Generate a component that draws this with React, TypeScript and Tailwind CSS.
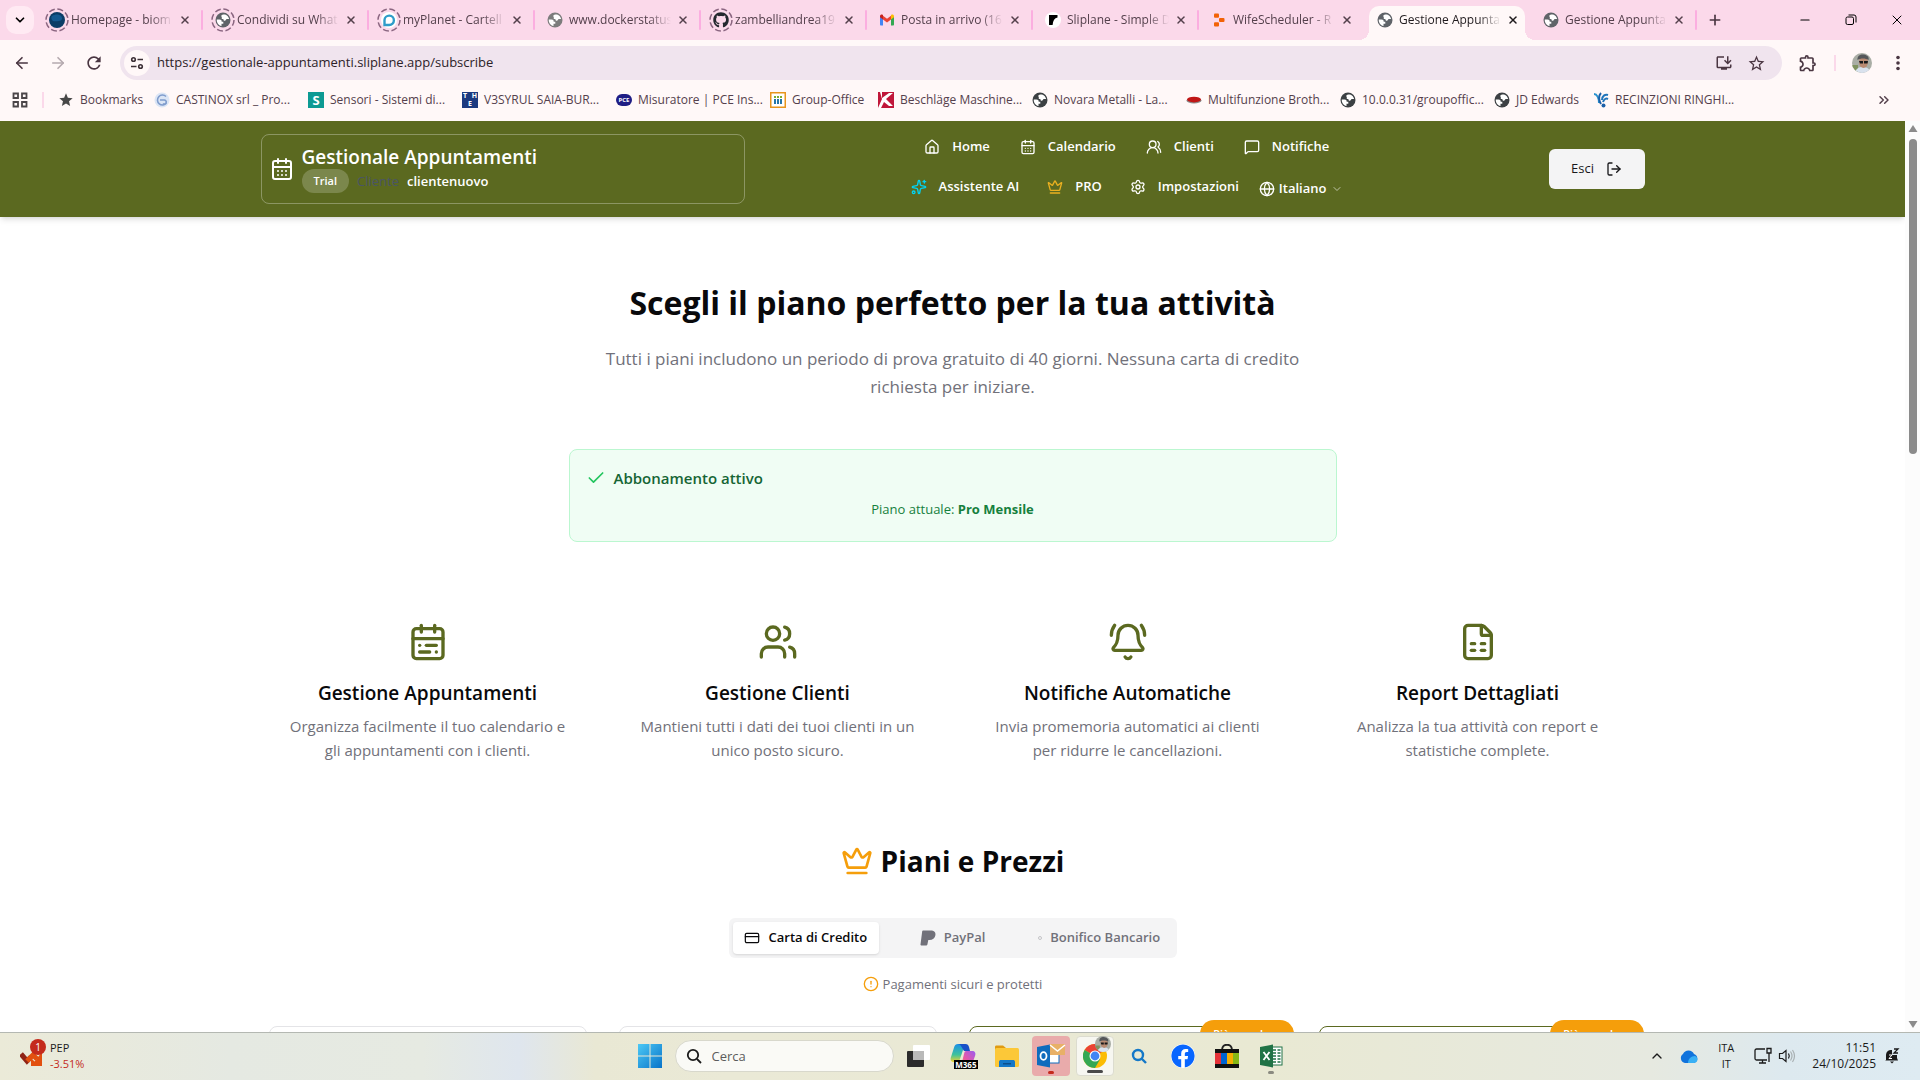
import React from "react";
import {
  ArrowLeft,
  ArrowRight,
  BellRing,
  CalendarDays,
  CalendarRange,
  Check,
  ChevronDown,
  ChevronUp,
  ChevronsRight,
  CircleAlert,
  CreditCard,
  Crown,
  FileSpreadsheet,
  Globe,
  House,
  LogOut,
  MessageSquare,
  Minus,
  Plus,
  Settings,
  Sparkles,
  Users,
  UsersRound,
  X,
} from "lucide-react";
import { FaFacebook, FaGithub } from "react-icons/fa";
import { MdOutlineExtension, MdOutlineInstallDesktop, MdRefresh, MdStar, MdStarBorder } from "react-icons/md";

/* ---------- small drawings ---------- */

function GlobeIcon({ className = "size-4 text-[#5f6368]" }: { className?: string }) {
  return (
    <svg viewBox="0 0 16 16" className={className} aria-hidden="true">
      <circle cx="8" cy="8" r="7.5" fill="currentColor" />
      <path d="M1.800 7.500h2.700c1.700 0 2.200.8 2.200 2.200h1.600v2H6.500v2.300C3.500 13.500 1.500 10.800 1.800 7.500zM6.300 4.200c0-1.200.8-1.700 2-1.800h1.800c2.200.8 3.700 2.600 4 4.600h-2.300c-.8 0-1 1.800-2 1.800-1.200 0-1.400-.9-1.400-1.800H6.800V5.200z" fill="#fff" />
    </svg>
  );
}

function Ringed({ children }: { children: React.ReactNode }) {
  return (
    <span className="relative grid size-6 place-items-center">
      <svg viewBox="0 0 24 24" className="absolute inset-0 size-6" fill="none" stroke="#8a6580" strokeWidth="1.5" aria-hidden="true">
        <circle cx="12" cy="12" r="11" strokeDasharray="6 2.640" />
      </svg>
      {children}
    </span>
  );
}

function EarthIcon() {
  return (
    <svg viewBox="0 0 16 16" className="size-4" aria-hidden="true">
      <circle cx="8" cy="8" r="8" fill="#0b3d66" />
      <path d="M3 4c3-2 7-2 9 0s1 5-2 5-6 1-7-1-1-3 0-4z" fill="#14598f" />
    </svg>
  );
}

function PlanetIcon() {
  return (
    <svg viewBox="0 0 16 16" className="size-4" aria-hidden="true">
      <circle cx="8" cy="8" r="8" fill="#fff" />
      <path d="M3.500 13V8a4.700 4.700 0 1 1 4.700 5z" fill="none" stroke="#2f9cc9" strokeWidth="2.400" />
    </svg>
  );
}

function GmailIcon() {
  return (
    <svg viewBox="0 0 16 16" className="size-4" aria-hidden="true">
      <path d="M1 4v8.500c0 .5.4 1 1 1h2V7z" fill="#4285f4" />
      <path d="M15 4v8.500c0 .5-.4 1-1 1h-2V7z" fill="#34a853" />
      <path d="M4 3.800v3.600l4 3 4-3V3.800l-4 3z" fill="#ea4335" />
      <path d="M1 4c0-1.500 1.700-2 2.600-1.300L4 3v4.400L1 5.200z" fill="#c5221f" />
      <path d="M15 4c0-1.500-1.700-2-2.600-1.300L12 3v4.400l3-2.200z" fill="#fbbc04" />
    </svg>
  );
}

function SliplaneIcon() {
  return (
    <svg viewBox="0 0 16 16" className="size-4" aria-hidden="true">
      <circle cx="8" cy="8" r="8" fill="#fff" />
      <path d="M4 3h8.500v2.500C9.500 6 8 8.500 7.600 13H4z" fill="#000" />
    </svg>
  );
}

function ReplitIcon() {
  return (
    <svg viewBox="0 0 16 16" className="size-4" aria-hidden="true">
      <rect x="3" y="1.500" width="5" height="4.200" rx="1" fill="#f26207" />
      <rect x="8" y="5.900" width="5.500" height="4.200" rx="1" fill="#f26207" />
      <rect x="3" y="10.300" width="5" height="4.200" rx="1" fill="#f26207" />
    </svg>
  );
}

function PaypalIcon() {
  return (
    <svg viewBox="0 0 16 16" className="size-4" fill="currentColor" aria-hidden="true">
      <path d="M3 .6h7.600c3.600 0 5.300 2 4.800 4.700-.5 3-2.800 4.700-6 4.700H8.300l-.9 4.600c-.1.500-.4.800-.9.800H1.200c-.5 0-.8-.4-.7-.9L2.200 1.300c.1-.4.4-.7.8-.7z" />
    </svg>
  );
}

function Avatar({ className = "size-5" }: { className?: string }) {
  return (
    <svg viewBox="0 0 20 20" className={className} aria-hidden="true">
      <defs>
        <clipPath id="avatar-clip">
          <circle cx="10" cy="10" r="10" />
        </clipPath>
      </defs>
      <g clipPath="url(#avatar-clip)">
        <rect width="20" height="20" fill="#a9ada5" />
        <path d="M0 12h6v8H0z" fill="#7f9260" />
        <path d="M3 20c1-5 4-6 8-6s7 2 7 6z" fill="#d9e2ee" />
        <ellipse cx="11.500" cy="9" rx="4.500" ry="6" fill="#b98a72" />
        <path d="M5.500 7C5 2 9 1 12 1.500S17.500 4 16.500 7c-3-2-8-2-11 0z" fill="#55575a" />
        <path d="M7 8h4v2.500H8zM12 8h4l-.5 2.500H12z" fill="#17181b" />
      </g>
    </svg>
  );
}

/* ---------- browser tabs ---------- */

type TabItem = { label: string; icon: React.ReactNode; active?: boolean; divider?: boolean };

const tabs: TabItem[] = [
  { label: "Homepage - biom", icon: <Ringed><EarthIcon /></Ringed>, divider: true },
  { label: "Condividi su What", icon: <Ringed><GlobeIcon /></Ringed>, divider: true },
  { label: "myPlanet - Cartell", icon: <Ringed><PlanetIcon /></Ringed>, divider: true },
  { label: "www.dockerstatus", icon: <GlobeIcon className="size-4 text-[#7c7c7c]" />, divider: true },
  { label: "zambelliandrea19", icon: <Ringed><FaGithub className="size-4 text-[#24292f]" /></Ringed>, divider: true },
  { label: "Posta in arrivo (16", icon: <GmailIcon />, divider: true },
  { label: "Sliplane - Simple D", icon: <SliplaneIcon />, divider: true },
  { label: "WifeScheduler - R", icon: <ReplitIcon /> },
  { label: "Gestione Appunta", icon: <GlobeIcon />, active: true },
  { label: "Gestione Appunta", icon: <GlobeIcon />, divider: true },
];

function Tab({ tab }: { tab: TabItem }) {
  return (
    <div className="flex h-[34px] w-[166px] shrink">
      <div
        className={
          "relative mx-1 flex h-full min-w-0 flex-1 items-center rounded-t-[10px] pb-1.5 pl-1 " +
          (tab.active ? "bg-[#fff8f8] text-[#1f1a1d]" : "text-[#54404c]")
        }
      >
        {tab.active && (
          <>
            <span className="absolute bottom-0 -left-2.5 size-2.5 bg-[radial-gradient(circle_at_0_0,transparent_10px,#fff8f8_10px)]" />
            <span className="absolute -right-2.5 bottom-0 size-2.5 bg-[radial-gradient(circle_at_100%_0,transparent_10px,#fff8f8_10px)]" />
          </>
        )}
        <span className="grid size-6 shrink-0 place-items-center">{tab.icon}</span>
        <span className="ml-0.5 w-[102px] shrink-0 text-[12px] whitespace-nowrap [mask-image:linear-gradient(to_right,black_78%,transparent)]">
          {tab.label}
        </span>
        <button type="button" aria-label="Chiudi scheda" className="ml-1 grid size-4 shrink-0 place-items-center">
          <X className="size-3" strokeWidth={3} />
        </button>
      </div>
      <span className={"mt-1 h-5 w-0.5 rounded " + (tab.divider ? "bg-[#fbaee0]" : "bg-transparent")} />
    </div>
  );
}

function TabStrip() {
  return (
    <div className="flex h-10 items-end bg-[#fbd9ea]">
      <button type="button" aria-label="Cerca schede" className="mb-1.5 ml-1.5 grid size-7 shrink-0 place-items-center rounded-[10px] bg-[#ffeaf3]">
        <ChevronDown className="size-3.5" strokeWidth={3} />
      </button>
      <div className="ml-[3px] flex">
        {tabs.map((t, i) => (
          <Tab key={i} tab={t} />
        ))}
      </div>
      <button type="button" aria-label="Nuova scheda" className="mb-2.5 ml-2 grid size-5 place-items-center text-[#4a3642]">
        <Plus className="size-4" strokeWidth={2.5} />
      </button>
      <div className="mb-2.5 ml-auto flex text-black">
        <button type="button" aria-label="Riduci" className="grid h-5 w-[46px] place-items-center">
          <Minus className="size-3.5" strokeWidth={2} />
        </button>
        <button type="button" aria-label="Ripristina" className="grid h-5 w-[46px] place-items-center">
          <svg viewBox="0 0 12 12" className="size-3" fill="none" stroke="currentColor">
            <rect x="1" y="3" width="7.500" height="7.500" rx="1.500" />
            <path d="M3.500 1h5.500a2 2 0 0 1 2 2v5.500" />
          </svg>
        </button>
        <button type="button" aria-label="Chiudi" className="grid h-5 w-[46px] place-items-center">
          <X className="size-4" strokeWidth={1.5} />
        </button>
      </div>
    </div>
  );
}

function Toolbar() {
  return (
    <div className="flex h-[46px] items-center text-[#4a3642]">
      <button type="button" aria-label="Indietro" className="ml-3 grid size-5 place-items-center">
        <ArrowLeft className="size-[18px]" strokeWidth={2.2} />
      </button>
      <button type="button" aria-label="Avanti" className="ml-4 grid size-5 place-items-center text-[#b5a9af]">
        <ArrowRight className="size-[18px]" strokeWidth={2.2} />
      </button>
      <button type="button" aria-label="Ricarica" className="ml-4 grid size-5 place-items-center">
        <MdRefresh className="size-5" />
      </button>
      <div className="ml-4 flex h-[34px] flex-1 items-center rounded-full bg-[#f0e4ee] px-1">
        <button type="button" aria-label="Informazioni sul sito" className="grid size-[26px] place-items-center rounded-full bg-[#fff8f8]">
          <svg viewBox="0 0 16 16" className="size-4" fill="none" stroke="#3c3036" strokeWidth="1.600">
            <circle cx="4.500" cy="4.500" r="1.800" />
            <path d="M8.500 4.500H14M2 11.500h5.500" />
            <circle cx="11.500" cy="11.500" r="1.800" />
          </svg>
        </button>
        <input
          aria-label="Barra degli indirizzi"
          defaultValue="https://gestionale-appuntamenti.sliplane.app/subscribe"
          className="ml-[7px] min-w-0 flex-1 bg-transparent text-[13px] text-[#2c2228] outline-none"
        />
        <button type="button" aria-label="Installa app" className="mr-3 grid size-5 place-items-center">
          <MdOutlineInstallDesktop className="size-[18px]" />
        </button>
        <button type="button" aria-label="Aggiungi ai preferiti" className="mr-3 grid size-5 place-items-center">
          <MdStarBorder className="size-[19px]" />
        </button>
      </div>
      <button type="button" aria-label="Estensioni" className="ml-4 grid size-5 place-items-center">
        <MdOutlineExtension className="size-5" />
      </button>
      <span className="mx-4 h-4 w-0.5 bg-[#fbd9ea]" />
      <button type="button" aria-label="Profilo">
        <Avatar />
      </button>
      <button type="button" aria-label="Menu" className="mr-3 ml-4 grid size-5 place-items-center">
        <svg viewBox="0 0 20 20" className="size-5" fill="currentColor">
          <circle cx="10" cy="4.500" r="1.800" />
          <circle cx="10" cy="10" r="1.800" />
          <circle cx="10" cy="15.500" r="1.800" />
        </svg>
      </button>
    </div>
  );
}

const bookmarks: { label: string; width: string; icon: React.ReactNode }[] = [
  {
    label: "CASTINOX srl _ Pro...",
    width: "w-[154px]",
    icon: (
      <svg viewBox="0 0 16 16" className="size-4">
        <circle cx="8" cy="8" r="7.500" fill="#dbe5f5" />
        <path d="M12 4.500A5 5 0 1 0 12.500 11M6 8h4a2 2 0 1 1-1 3.500" fill="none" stroke="#7f9ccd" strokeWidth="1.600" />
      </svg>
    ),
  },
  {
    label: "Sensori - Sistemi di...",
    width: "w-[154px]",
    icon: <span className="grid size-4 place-items-center bg-[#0d9a93] text-[13px] leading-4 font-bold text-white">S</span>,
  },
  {
    label: "V3SYRUL SAIA-BUR...",
    width: "w-[154px]",
    icon: (
      <span className="flex size-4 flex-col bg-[#1c3a80] text-[7px] leading-2 font-bold text-white">
        <span className="flex justify-between px-px">
          <span>T</span>
          <span>H</span>
        </span>
        <span className="text-center">E</span>
      </span>
    ),
  },
  {
    label: "Misuratore | PCE Ins...",
    width: "w-[154px]",
    icon: <span className="grid h-3 w-4 place-items-center rounded-full bg-[#1f1d84] text-[6px] leading-3 font-bold text-white">PCE</span>,
  },
  {
    label: "Group-Office",
    width: "w-[108px]",
    icon: (
      <svg viewBox="0 0 16 16" className="size-4">
        <rect x=".75" y=".75" width="14.500" height="14.500" fill="#fff" stroke="#e8951c" strokeWidth="1.500" />
        <path d="M5 4v2M8 4v2M11 4v2" stroke="#7cab2f" strokeWidth="2" />
        <path d="M5 7v5M8 7v5M11 7v5" stroke="#2576a8" strokeWidth="2" />
      </svg>
    ),
  },
  {
    label: "Beschläge Maschine...",
    width: "w-[154px]",
    icon: (
      <svg viewBox="0 0 16 16" className="size-4">
        <rect width="16" height="16" fill="#c0173a" />
        <path d="M2 0h2v6l7-5h4L8 7l7 7h-4L6 10l-3 6H0l4-9z" fill="#fff" />
      </svg>
    ),
  },
  { label: "Novara Metalli - La...", width: "w-[154px]", icon: <GlobeIcon className="size-4 text-[#3c4043]" /> },
  {
    label: "Multifunzione Broth...",
    width: "w-[154px]",
    icon: (
      <svg viewBox="0 0 16 16" className="size-4">
        <ellipse cx="8" cy="8.500" rx="7.500" ry="3" fill="#8c8c8c" />
        <ellipse cx="8" cy="7.600" rx="7" ry="2.800" fill="#c01616" />
      </svg>
    ),
  },
  { label: "10.0.0.31/groupoffic...", width: "w-[154px]", icon: <GlobeIcon className="size-4 text-[#3c4043]" /> },
  { label: "JD Edwards", width: "w-[99px]", icon: <GlobeIcon className="size-4 text-[#3c4043]" /> },
  {
    label: "RECINZIONI RINGHI...",
    width: "w-[154px]",
    icon: (
      <svg viewBox="0 0 16 16" className="size-4" fill="none" strokeWidth="2">
        <path d="M1 2c3 0 5 4 5 9" stroke="#2a93cf" />
        <path d="M8 1C5 4 6 9 8 12" stroke="#1b5fa8" />
        <path d="M15 3c-3-1-6 1-6 5M15 7c-2-1-4 0-5 3" stroke="#1f74ba" />
        <circle cx="10.500" cy="13.500" r="2" fill="#1b5fa8" stroke="none" />
      </svg>
    ),
  },
];

function BookmarksBar() {
  return (
    <nav aria-label="Preferiti" className="flex h-[35px] items-center pb-2 text-[12px] text-[#54404c]">
      <button type="button" aria-label="App" className="ml-3 grid size-4 place-items-center">
        <svg viewBox="0 0 16 16" className="size-4" fill="none" stroke="#4a4548" strokeWidth="1.800">
          <path d="M1.500 1.500h4.500v4.500H1.500zM10 1.500h4.500v4.500H10zM1.500 10h4.500v4.500H1.500zM10 10h4.500v4.500H10z" />
        </svg>
      </button>
      <span className="mx-3.5 h-4 w-0.5 bg-[#fbd9ea]" />
      <a href="#" className="flex w-24 items-center gap-1.5 whitespace-nowrap">
        <MdStar className="size-4 shrink-0 text-[#474747]" />
        Bookmarks
      </a>
      {bookmarks.map((b) => (
        <a key={b.label} href="#" className={"flex items-center gap-1.5 whitespace-nowrap " + b.width}>
          <span className="grid size-4 shrink-0 place-items-center">{b.icon}</span>
          {b.label}
        </a>
      ))}
      <button type="button" aria-label="Altri preferiti" className="mr-7 ml-auto">
        <ChevronsRight className="size-4" strokeWidth={2.2} />
      </button>
    </nav>
  );
}

/* ---------- web app ---------- */

function NavItem({ icon, label }: { icon: React.ReactNode; label: string }) {
  return (
    <a href="#" className="flex h-10 items-center gap-3 px-3 text-[13px] font-semibold whitespace-nowrap">
      {icon}
      {label}
    </a>
  );
}

function AppHeader() {
  return (
    <header className="bg-[#5b6920] text-white shadow-md">
      <div className="mx-auto flex max-w-[1400px] items-center px-2 py-1.5">
        <div className="flex h-[70px] w-[35%] items-center gap-2 rounded-lg border border-white/30 px-2">
          <CalendarDays className="size-6 shrink-0" />
          <div>
            <div className="text-[19px] leading-6 font-semibold">Gestionale Appuntamenti</div>
            <div className="flex items-center text-[13px] leading-6">
              <span className="mr-2 rounded-full bg-white/20 px-3 text-[11px] font-semibold">Trial</span>
              <span className="mr-2 text-gray-600">Cliente</span>
              <span className="font-semibold">clientenuovo</span>
            </div>
          </div>
        </div>
        <nav aria-label="Principale" className="flex flex-1 flex-col items-center pr-10 pb-1">
          <div className="flex gap-1.5">
            <NavItem icon={<House className="size-4" />} label="Home" />
            <NavItem icon={<CalendarDays className="size-4" />} label="Calendario" />
            <NavItem icon={<UsersRound className="size-4" />} label="Clienti" />
            <NavItem icon={<MessageSquare className="size-4" />} label="Notifiche" />
          </div>
          <div className="flex gap-1">
            <NavItem icon={<Sparkles className="size-4 text-cyan-400" />} label="Assistente AI" />
            <NavItem icon={<Crown className="size-4 text-[#eab020]" />} label="PRO" />
            <NavItem icon={<Settings className="size-4" />} label="Impostazioni" />
            <label className="flex h-10 items-center gap-1 pt-1 pr-3 pl-1 text-[13px] font-semibold">
              <Globe className="size-4" />
              <select aria-label="Lingua" className="appearance-none bg-transparent outline-none">
                <option>Italiano</option>
              </select>
              <ChevronDown className="size-3 opacity-60" />
            </label>
          </div>
        </nav>
        <button type="button" className="flex h-10 w-24 items-center justify-center gap-3 rounded-md bg-[#f4f4f5] text-[13px] font-medium text-[#18181b]">
          Esci
          <LogOut className="size-4" />
        </button>
      </div>
    </header>
  );
}

const features = [
  { icon: CalendarRange, title: "Gestione Appuntamenti", text: "Organizza facilmente il tuo calendario e gli appuntamenti con i clienti." },
  { icon: Users, title: "Gestione Clienti", text: "Mantieni tutti i dati dei tuoi clienti in un unico posto sicuro." },
  { icon: BellRing, title: "Notifiche Automatiche", text: "Invia promemoria automatici ai clienti per ridurre le cancellazioni." },
  { icon: FileSpreadsheet, title: "Report Dettagliati", text: "Analizza la tua attività con report e statistiche complete." },
];

function PlanCard({ popular = false }: { popular?: boolean }) {
  return (
    <article className={"relative h-96 rounded-lg border " + (popular ? "border-[#5b6920]" : "border-[#e4e4e7]")}>
      {popular && (
        <span className="absolute -top-[7px] -right-2 rounded-full bg-[#f59e0b] px-[13px] text-[11px] leading-7 font-semibold text-white">
          Più popolare
        </span>
      )}
    </article>
  );
}

function SubscribePage() {
  const tab = "flex h-8 items-center justify-center gap-2 rounded-sm text-[13px] font-semibold whitespace-nowrap ";
  return (
    <main className="mx-auto max-w-[1400px] px-4 pt-16 text-[#09090b]">
      <section className="text-center">
        <h1 className="text-[32px] leading-11 font-bold">Scegli il piano perfetto per la tua attività</h1>
        <p className="mx-auto mt-5 max-w-[740px] text-[17px] leading-7 text-[#71717a]">
          Tutti i piani includono un periodo di prova gratuito di 40 giorni. Nessuna carta di credito richiesta per iniziare.
        </p>
      </section>

      <section className="mx-auto mt-12 h-[93px] max-w-3xl rounded-lg border border-[#bbf7d0] bg-[#f0fdf4] px-4 pt-4 text-[#166534]">
        <h2 className="flex items-center gap-2 text-[15px] leading-6 font-semibold">
          <Check className="size-5 text-[#22c55e]" />
          Abbonamento attivo
        </h2>
        <p className="mt-2 text-center text-[13px] leading-[22px] text-[#15803d]">
          Piano attuale: <strong className="font-bold">Pro Mensile</strong>
        </p>
      </section>

      <section className="mt-16 grid grid-cols-4 gap-8">
        {features.map(({ icon: Icon, title, text }) => (
          <div key={title} className="flex flex-col items-center p-4 text-center">
            <Icon className="size-10 text-[#5b6920]" />
            <h3 className="mt-4 text-[19px] leading-[30px] font-semibold">{title}</h3>
            <p className="mt-1.5 text-[15px] leading-6 text-[#71717a]">{text}</p>
          </div>
        ))}
      </section>

      <section className="mt-16">
        <h2 className="flex items-center justify-center gap-2 text-[28px] leading-[38px] font-bold">
          <Crown className="size-8 text-[#f59e0b]" />
          Piani e Prezzi
        </h2>
        <div role="tablist" className="mx-auto mt-[38px] grid h-10 max-w-md grid-cols-3 rounded-md bg-[#f4f4f5] p-1 text-[#71717a]">
          <button type="button" role="tab" aria-selected="true" className={tab + "bg-white text-[#09090b] shadow-sm"}>
            <CreditCard className="size-4" strokeWidth={1.8} />
            Carta di Credito
          </button>
          <button type="button" role="tab" aria-selected="false" className={tab}>
            <PaypalIcon />
            PayPal
          </button>
          <button type="button" role="tab" aria-selected="false" className={tab}>
            <span className="size-1 rounded-full border border-[#c4c4c8]" />
            Bonifico Bancario
          </button>
        </div>
        <p className="mt-4 flex items-center justify-center gap-1 text-[13px] leading-5 text-[#71717a]">
          <CircleAlert className="size-4 text-[#f59e0b]" />
          Pagamenti sicuri e protetti
        </p>
        <div className="mt-8 grid grid-cols-4 gap-8">
          <PlanCard />
          <PlanCard />
          <PlanCard popular />
          <PlanCard popular />
        </div>
      </section>
    </main>
  );
}

/* ---------- taskbar ---------- */

function TaskButton({ label, className = "", mark, children }: { label: string; className?: string; mark?: string; children: React.ReactNode }) {
  return (
    <button type="button" aria-label={label} className={"relative grid h-10 w-[38px] place-items-center rounded " + className}>
      {children}
      {mark && <span className={"absolute bottom-0.5 h-[3px] rounded-full " + mark} />}
    </button>
  );
}

function Taskbar() {
  return (
    <footer className="relative grid h-12 shrink-0 grid-cols-[1fr_auto_1fr] items-center border-t border-[#b4b8b2] bg-[linear-gradient(90deg,#ebead8_0%,#e5e9e2_12%,#e6eae2_22%,#dfe6ee_27%,#e9e8d4_31%,#eae9d6_38%,#e9e9d3_66%,#e6e9e0_86%,#dde9ef_93%,#deebf2_100%)] pb-px text-[12px] leading-4 text-[#1b1b1b]">
      <button type="button" className="ml-5 flex items-center text-left text-[11px]">
        <span className="relative">
          <svg viewBox="0 0 30 30" className="size-[30px]">
            <path d="M1 13l6 7 4-4" fill="none" stroke="#8f2416" strokeWidth="5" />
            <path d="M7 20l6-6 4 4" fill="none" stroke="#e2500f" strokeWidth="5" />
            <path d="M22 11v14H11z" fill="#e2500f" />
            <path d="M11 17v8h8z" fill="#e2500f" />
          </svg>
          <span className="absolute -top-0.5 left-2.5 grid size-4 place-items-center rounded-full bg-[#c42b1c] text-[10px] text-white">1</span>
        </span>
        <span>
          PEP
          <br />
          <span className="text-[#c42b1c]">-3.51%</span>
        </span>
      </button>

      <div className="flex items-center">
        <TaskButton label="Start">
          <svg viewBox="0 0 24 24" className="size-6">
            <defs>
              <linearGradient id="win" x1="0" y1="0" x2="1" y2="1">
                <stop offset="0" stopColor="#4cc9f5" />
                <stop offset="1" stopColor="#0873c9" />
              </linearGradient>
            </defs>
            <path d="M0 0h11.500v11.500H0zM12.500 0H24v11.500H12.500zM0 12.500h11.500V24H0zM12.500 12.500H24V24H12.500z" fill="url(#win)" />
          </svg>
        </TaskButton>
        <label className="mr-1.5 ml-1.5 flex h-8 w-[219px] items-center gap-2.5 rounded-full border border-[#d8d8cc] bg-[#fafaf6] px-2.5">
          <svg viewBox="0 0 16 16" className="size-4" fill="none" stroke="#1b1b1b" strokeWidth="1.800">
            <circle cx="7" cy="7" r="5.200" />
            <path d="M11 11l4 4" />
          </svg>
          <input aria-label="Cerca" placeholder="Cerca" className="min-w-0 flex-1 bg-transparent text-[13px] outline-none placeholder:text-[#5c5c5c]" />
        </label>
        <div className="flex items-center gap-1.5">
          <TaskButton label="Visualizzazione attività">
            <svg viewBox="0 0 24 24" className="size-6">
              <rect x="0" y="7" width="17" height="16" rx="1" fill="#2b2b2b" />
              <rect x="6" y="1" width="17" height="15" rx="1" fill="#fff" />
              <path d="M6 7h11v9H6z" fill="#b9b9b9" />
            </svg>
          </TaskButton>
          <TaskButton label="Microsoft 365 Copilot">
            <span className="relative">
              <svg viewBox="0 0 26 26" className="size-[26px]">
                <defs>
                  <linearGradient id="cop-a" x1="0" y1="0" x2="0" y2="1">
                    <stop offset="0" stopColor="#1a8fe8" />
                    <stop offset=".6" stopColor="#3fc39a" />
                    <stop offset="1" stopColor="#f2d230" />
                  </linearGradient>
                  <linearGradient id="cop-b" x1="1" y1="0" x2="0" y2="1">
                    <stop offset="0" stopColor="#9a5cf0" />
                    <stop offset=".6" stopColor="#e857a5" />
                    <stop offset="1" stopColor="#f8934a" />
                  </linearGradient>
                </defs>
                <path d="M8 1h7l-5 15c-.7 2-2 3-4 3H4c-3 0-4-2-3-5L4.200 4c.6-2 1.800-3 3.800-3z" fill="url(#cop-a)" />
                <path d="M8 1h7.500c2 0 3 1 3.500 3l1 4h-6l-3-5c-.7-1.200-1.500-2-3-2z" fill="#1850c8" />
                <path d="M16 8h6c3 0 4 2 3 5l-2.500 7c-.7 2-1.500 3-3.500 3h-8l3-12c.4-2 1-3 2-3z" fill="url(#cop-b)" />
              </svg>
              <span className="absolute -right-0.5 bottom-0 bg-black px-px text-[8px] leading-[9px] font-bold text-white">M365</span>
            </span>
          </TaskButton>
          <TaskButton label="Esplora file">
            <svg viewBox="0 0 24 24" className="size-6">
              <path d="M0 3c0-1 .6-1.500 1.500-1.500H8L11 4v5H0z" fill="#e09b12" />
              <rect y="4" width="24" height="19" rx="1.500" fill="#fcc838" />
              <path d="M4 23v-5c0-1.500 1-2 2-2h12c1 0 2 .5 2 2v5z" fill="#1478c8" />
              <path d="M8 19h8v1.500H8z" fill="#0b4f8c" />
            </svg>
          </TaskButton>
          <TaskButton label="Outlook" className="bg-[#e9abab]" mark="w-1.5 bg-[#c42b1c]">
            <svg viewBox="0 0 30 24" className="h-6 w-[30px]">
              <rect x="9" y="6" width="14" height="13" fill="#fff" stroke="#0f6cbd" />
              <path d="M1 3l13-2.500v23L1 21z" fill="#0f6cbd" />
              <ellipse cx="7.500" cy="12" rx="3" ry="3.800" fill="none" stroke="#fff" strokeWidth="1.800" />
              <rect x="14" y="0" width="15" height="11" fill="#e8b067" />
              <path d="M14 1l7.500 6L29 1" fill="none" stroke="#fff" strokeWidth="1.500" />
            </svg>
          </TaskButton>
          <TaskButton label="Google Chrome" className="border border-[#dcdccf] bg-[#f7f7f1]" mark="w-4 bg-[#4a4a4a]">
            <span className="relative">
              <svg viewBox="0 0 24 24" className="size-6">
                <circle cx="12" cy="12" r="12" fill="#fbbc04" />
                <path d="M12 12L1.600 6A12 12 0 0 1 22.400 6z" fill="#ea4335" />
                <path d="M12 12L1.600 6A12 12 0 0 0 12 24l5.200-9z" fill="#34a853" />
                <circle cx="12" cy="12" r="5.500" fill="#fff" />
                <circle cx="12" cy="12" r="4.400" fill="#4285f4" />
              </svg>
              <Avatar className="absolute -top-2 -right-1 size-4" />
            </span>
          </TaskButton>
          <TaskButton label="Ricerca">
            <svg viewBox="0 0 16 16" className="size-4" fill="none" stroke="#1478c8" strokeWidth="2.400">
              <circle cx="7" cy="7" r="5" />
              <path d="M10.500 10.500L15 15" />
            </svg>
          </TaskButton>
          <TaskButton label="Facebook">
            <FaFacebook className="size-6 rounded-full bg-white text-[#0866ff]" />
          </TaskButton>
          <TaskButton label="Store">
            <svg viewBox="0 0 24 24" className="size-6">
              <path d="M7 6c0-7 10-7 10 0" fill="none" stroke="#222" strokeWidth="2" />
              <path d="M0 5h24v19H0z" fill="#111" />
              <path d="M0 9h6v11H0z" fill="#e53238" />
              <path d="M6 9h6v11H6z" fill="#0064d2" />
              <path d="M12 9h6v11h-6z" fill="#f5af02" />
              <path d="M18 9h6v11h-6z" fill="#86b817" />
            </svg>
          </TaskButton>
          <TaskButton label="Excel" mark="w-1.5 bg-[#8a8a80]">
            <svg viewBox="0 0 24 24" className="size-6">
              <rect x="12" y="3" width="11" height="18" fill="#fff" stroke="#217346" />
              <path d="M14 6h3M14 9h3M14 12h3M14 15h3M14 18h3M18.500 6h3M18.500 9h3M18.500 12h3M18.500 15h3M18.500 18h3" stroke="#217346" strokeWidth="1.500" />
              <path d="M1 3l13-2.500v23L1 21z" fill="#217346" />
              <path d="M4.500 8l6 8M10.500 8l-6 8" stroke="#fff" strokeWidth="1.800" />
            </svg>
          </TaskButton>
        </div>
      </div>

      <div className="mr-5 flex items-center justify-end">
        <ChevronUp className="size-4" strokeWidth={2} />
        <svg viewBox="0 0 18 16" className="ml-[15px] h-4 w-[18px]">
          <path d="M5 15a5 5 0 0 1-2-9 6 6 0 0 1 11 0 4.700 4.700 0 0 1 0 9z" fill="#1173dc" />
          <path d="M8 15c0-4 3-7 7-7 3 1 4 6-1 7z" fill="#39b0f5" />
        </svg>
        <span className="ml-5 text-center text-[11px]">
          ITA
          <br />
          IT
        </span>
        <svg viewBox="0 0 18 18" className="ml-5 size-[18px]" fill="none" stroke="#1b1b1b" strokeWidth="1.300">
          <path d="M11 2H2.500A1.500 1.500 0 0 0 1 3.500v8A1.500 1.500 0 0 0 2.500 13H13M5 16h7M8.500 13v3M13 1.500h4v4.500h-4zM15 6v9" />
        </svg>
        <svg viewBox="0 0 18 18" className="ml-1.5 size-[18px]" fill="none" stroke="#1b1b1b" strokeWidth="1.200">
          <path d="M1.500 6.500h3L8 3.500v11l-3.500-3h-3z" />
          <path d="M10.500 6.500q1.500 2.500 0 5" />
          <path d="M12.500 4.500q3 4.500 0 9M14.500 3q4 6 0 12" stroke="#a9b0b2" />
        </svg>
        <time className="ml-4 text-right">
          11:51
          <br />
          24/10/2025
        </time>
        <svg viewBox="0 0 16 16" className="ml-2 size-4" fill="#1b1b1b">
          <path d="M2 12V7a5 5 0 0 1 6-5v5h5v3l1 2.500H1zM6 13.500h4l-2 2z" />
          <path d="M10 1h4l-4 4h4" fill="none" stroke="#1b1b1b" strokeWidth="1.300" />
          <path d="M5 7h3l-3 3.500h3" fill="none" stroke="#fff" />
        </svg>
      </div>
    </footer>
  );
}

export default function App() {
  return (
    <div className="flex h-screen flex-col overflow-hidden bg-white font-['Open_Sans',sans-serif]">
      <TabStrip />
      <div className="bg-[#fff8f8]">
        <Toolbar />
        <BookmarksBar />
      </div>
      <div className="flex min-h-0 flex-1">
        <div className="min-w-0 flex-1 overflow-hidden">
          <AppHeader />
          <SubscribePage />
        </div>
        <div className="flex w-[15px] flex-col items-center justify-between bg-[#fcfcfc] py-1 text-[#8b8b8b]">
          <div className="flex flex-col items-center gap-1.5">
            <svg viewBox="0 0 10 8" className="h-2 w-2.5" fill="currentColor"><path d="M5 0l4.500 7h-9z" /></svg>
            <span className="h-[315px] w-2 rounded-full bg-current" />
          </div>
          <svg viewBox="0 0 10 8" className="h-2 w-2.5" fill="currentColor"><path d="M5 8L.5 1h9z" /></svg>
        </div>
      </div>
      <Taskbar />
    </div>
  );
}
